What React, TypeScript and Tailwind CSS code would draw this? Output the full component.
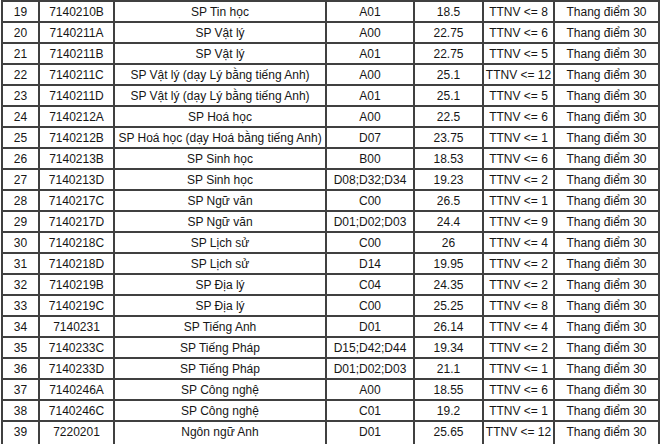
import React from "react";

const rows: string[][] = [
  ["19", "7140210B", "SP Tin học", "A01", "18.5", "TTNV <= 8"],
  ["20", "7140211A", "SP Vật lý", "A00", "22.75", "TTNV <= 6"],
  ["21", "7140211B", "SP Vật lý", "A01", "22.75", "TTNV <= 5"],
  ["22", "7140211C", "SP Vật lý (dạy Lý bằng tiếng Anh)", "A00", "25.1", "TTNV <= 12"],
  ["23", "7140211D", "SP Vật lý (dạy Lý bằng tiếng Anh)", "A01", "25.1", "TTNV <= 5"],
  ["24", "7140212A", "SP Hoá học", "A00", "22.5", "TTNV <= 6"],
  ["25", "7140212B", "SP Hoá học (dạy Hoá bằng tiếng Anh)", "D07", "23.75", "TTNV <= 1"],
  ["26", "7140213B", "SP Sinh học", "B00", "18.53", "TTNV <= 6"],
  ["27", "7140213D", "SP Sinh học", "D08;D32;D34", "19.23", "TTNV <= 2"],
  ["28", "7140217C", "SP Ngữ văn", "C00", "26.5", "TTNV <= 1"],
  ["29", "7140217D", "SP Ngữ văn", "D01;D02;D03", "24.4", "TTNV <= 9"],
  ["30", "7140218C", "SP Lịch sử", "C00", "26", "TTNV <= 4"],
  ["31", "7140218D", "SP Lịch sử", "D14", "19.95", "TTNV <= 2"],
  ["32", "7140219B", "SP Địa lý", "C04", "24.35", "TTNV <= 2"],
  ["33", "7140219C", "SP Địa lý", "C00", "25.25", "TTNV <= 8"],
  ["34", "7140231", "SP Tiếng Anh", "D01", "26.14", "TTNV <= 4"],
  ["35", "7140233C", "SP Tiếng Pháp", "D15;D42;D44", "19.34", "TTNV <= 2"],
  ["36", "7140233D", "SP Tiếng Pháp", "D01;D02;D03", "21.1", "TTNV <= 1"],
  ["37", "7140246A", "SP Công nghệ", "A00", "18.55", "TTNV <= 6"],
  ["38", "7140246C", "SP Công nghệ", "C01", "19.2", "TTNV <= 1"],
  ["39", "7220201", "Ngôn ngữ Anh", "D01", "25.65", "TTNV <= 12"],
];

export default function App() {
  return (
    <div
      className="w-[660px] h-[444px] overflow-hidden bg-white pl-[1px] text-[12px] leading-none text-[#161616]"
      style={{ fontFamily: '"Liberation Sans", Arial, sans-serif' }}
    >
      <div className="w-[659px] grid grid-cols-[35px_73px_210px_86px_67px_69px_103px] gap-[2px] bg-[#404040] p-[2px]">
        {rows.map((r, i) => {
          const last = i === rows.length - 1;
          const cells = [...r, "Thang điểm 30"];
          return cells.map((c, j) => (
            <div
              key={`${i}-${j}`}
              className={`bg-white flex items-center justify-center whitespace-nowrap pt-[1px] ${
                last ? "h-[22px] pb-[3px]" : "h-[19px]"
              }`}
            >
              {c}
            </div>
          ));
        })}
      </div>
    </div>
  );
}
